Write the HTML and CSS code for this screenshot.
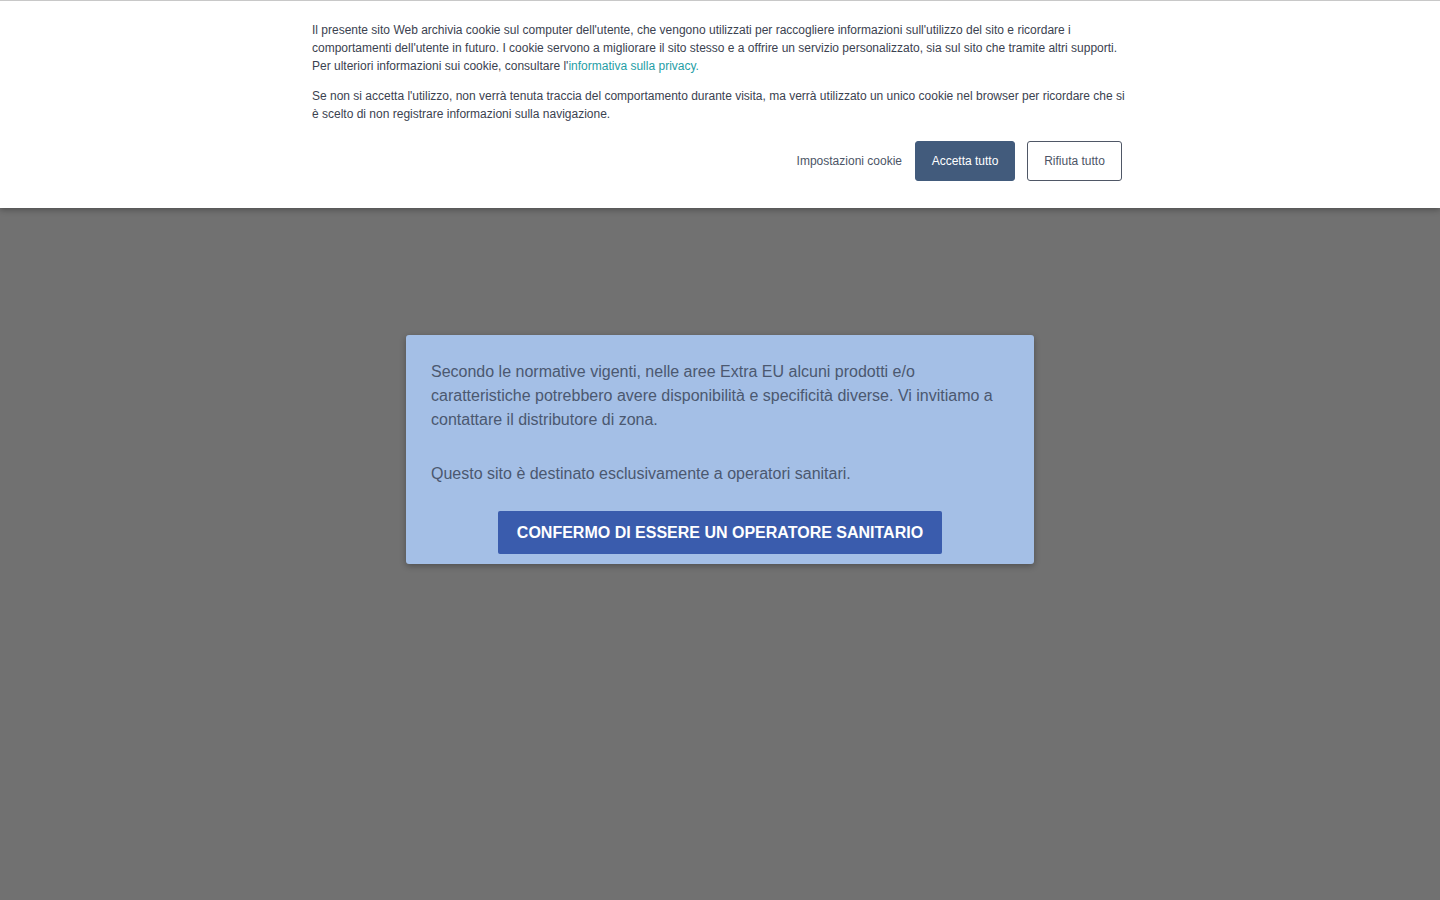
FILE: index.html
```html
<!DOCTYPE html>
<html lang="it">
<head>
<meta charset="utf-8">
<title>Cookie</title>
<link rel="stylesheet" href="styles.css">
</head>
<body>
<div class="page">
  <div class="cookie-bar">
    <div class="cookie-inner">
      <p class="cookie-text">Il presente sito Web archivia cookie sul computer dell'utente, che vengono utilizzati per raccogliere informazioni sull'utilizzo del sito e ricordare i comportamenti dell'utente in futuro. I cookie servono a migliorare il sito stesso e a offrire un servizio personalizzato, sia sul sito che tramite altri supporti. Per ulteriori informazioni sui cookie, consultare <a class="cookie-link" href="#"><span class="apos">l'</span>informativa sulla privacy.</a></p>
      <p class="cookie-text">Se non si accetta l'utilizzo, non verrà tenuta traccia del comportamento durante visita, ma verrà utilizzato un unico cookie nel browser per ricordare che si è scelto di non registrare informazioni sulla navigazione.</p>
      <div class="cookie-actions">
        <a class="settings-link" href="#">Impostazioni cookie</a>
        <button class="btn-accept">Accetta tutto</button>
        <button class="btn-reject">Rifiuta tutto</button>
      </div>
    </div>
  </div>
  <div class="overlay-area">
    <div class="modal">
      <p class="modal-text">Secondo le normative vigenti, nelle aree Extra EU alcuni prodotti e/o caratteristiche potrebbero avere disponibilità e specificità diverse. Vi invitiamo a contattare il distributore di zona.</p>
      <p class="modal-text modal-text-2">Questo sito è destinato esclusivamente a operatori sanitari.</p>
      <div class="modal-actions">
        <button class="btn-confirm">CONFERMO DI ESSERE UN OPERATORE SANITARIO</button>
      </div>
    </div>
  </div>
</div>
</body>
</html>
```
FILE: styles.css
```css
html, body {
  margin: 0;
  padding: 0;
  height: 100%;
}
body {
  background: #717171;
  font-family: "Liberation Sans", Arial, sans-serif;
  overflow: hidden;
}
.page {
  height: 900px;
  display: flex;
  flex-direction: column;
}
.cookie-bar {
  background: #ffffff;
  border-top: 1px solid #c8c8c8;
  box-shadow: 0 2px 6px rgba(0,0,0,0.3);
  height: 208px;
  box-sizing: border-box;
  position: relative;
  z-index: 2;
}
.cookie-inner {
  width: 816px;
  margin: 0 auto;
  padding-top: 20px;
}
.cookie-text {
  margin: 0 0 12px 0;
  font-size: 12px;
  line-height: 18px;
  color: #3b4250;
}
.cookie-link {
  color: #1f9ea6;
  text-decoration: none;
}
.apos {
  color: #3b4250;
}
.cookie-actions {
  display: flex;
  justify-content: flex-end;
  align-items: center;
  margin-top: 18px;
  padding-right: 6px;
}
.settings-link {
  font-size: 12px;
  color: #4c5566;
  text-decoration: none;
  margin-right: 13px;
}
.btn-accept {
  font-family: inherit;
  font-size: 12px;
  color: #ffffff;
  background: #425b7c;
  border: 1px solid #425b7c;
  border-radius: 3px;
  width: 100px;
  height: 40px;
  margin-right: 12px;
  padding: 0;
}
.btn-reject {
  font-family: inherit;
  font-size: 12px;
  color: #4c5566;
  background: #ffffff;
  border: 1px solid #4f5766;
  border-radius: 3px;
  width: 95px;
  height: 40px;
  padding: 0;
}
.overlay-area {
  flex: 1;
  display: flex;
  justify-content: center;
  padding-top: 127px;
}
.modal {
  width: 628px;
  height: 229px;
  box-sizing: border-box;
  background: #a4bfe6;
  border-radius: 3px;
  box-shadow: 0 2px 6px rgba(0,0,0,0.3);
  padding: 25px 25px 10px 25px;
  align-self: flex-start;
}
.modal-text {
  margin: 0;
  font-size: 16px;
  line-height: 24px;
  color: #4b5870;
}
.modal-text-2 {
  margin-top: 30px;
}
.modal-actions {
  display: flex;
  justify-content: center;
  margin-top: 25px;
}
.btn-confirm {
  font-family: inherit;
  font-size: 16px;
  font-weight: bold;
  color: #ffffff;
  background: #3a5cad;
  border: none;
  border-radius: 2px;
  width: 444px;
  height: 43px;
  padding: 0;
}
```
